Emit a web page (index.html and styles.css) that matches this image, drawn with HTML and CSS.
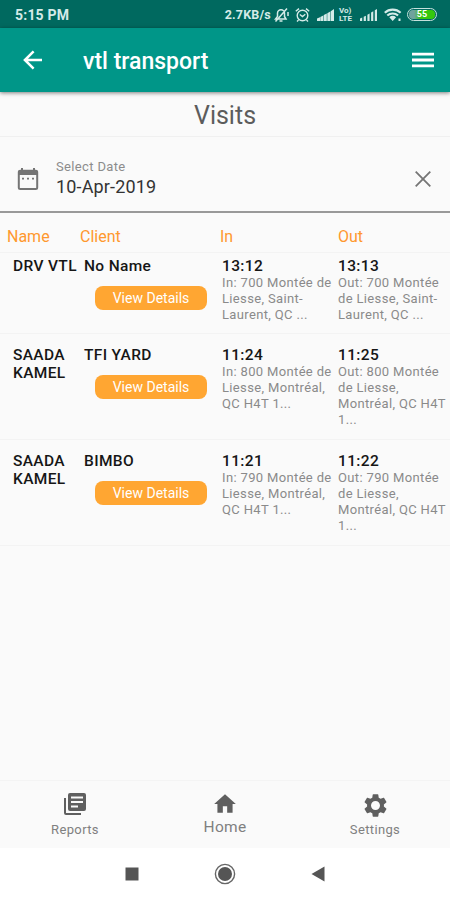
FILE: index.html
```html
<!DOCTYPE html>
<html lang="en">
<head>
    <meta charset="utf-8">
    <meta name="viewport" content="width=device-width, initial-scale=1">
    <title>vtl transport</title>
    <link rel="stylesheet" href="styles.css">
</head>
<body>

<div class="status-bar">
    <span class="clock">5:15 PM</span>
    <div class="status-icons">
        <span class="speed">2.7KB/s</span>
        <svg class="bell" width="15" height="16" viewBox="0 0 15 16" fill="none" stroke="currentColor" stroke-width="1.5">
            <path d="M1.5 12h10.5l-1.5-2.5V6.3a3.5 3.5 0 0 0-7 0v3.2zM5.5 14h3M1.5 14.5L13 1.5M14 5v4"/>
        </svg>
        <svg class="alarm" width="15" height="16" viewBox="0 0 15 16" fill="none" stroke="currentColor" stroke-width="1.4">
            <circle cx="7.5" cy="8.5" r="5.3"/>
            <path d="M4.8 7.5l2.7 2 2.8-2.2M.8 4.2L4 1.6M14.2 4.2L11 1.6M3.5 13l-1.5 1.5M11.5 13l1.5 1.5"/>
        </svg>
        <svg class="signal" width="17" height="13" viewBox="0 0 17 13" fill="currentColor">
            <path d="M0 10.5l3-1.3V13H0zM3.3 8.9l3-1.4V13h-3zM6.8 7.1l3-1.5V13h-3zM10.3 5.2l3-1.6V13h-3zM13.8 3.2L17 1v12h-3.2z"/>
        </svg>
        <span class="volte">Vo)<br>LTE</span>
        <svg class="signal" width="17" height="13" viewBox="0 0 17 13" fill="currentColor">
            <path d="M0 10.5l2.2-1V13H0zM3.7 8.7l2.2-1V13H3.7zM7.4 6.7l2.2-1.2V13H7.4zM11.1 4.5l2.2-1.2V13h-2.2zM14.8 2.2L17 1v12h-2.2z"/>
        </svg>
        <svg class="wifi" width="18" height="14" viewBox="0 0 18 14" fill="none" stroke="currentColor" stroke-width="2.1">
            <path d="M.8 4.8a11.4 11.4 0 0 1 15.8 0M3.3 7.6a7.8 7.8 0 0 1 10.8 0"/>
            <path d="M5.3 9.3a5.2 5.2 0 0 1 6.8 0L8.7 13zM14.5 10.5h2v2.5h-2z" fill="currentColor" stroke="none"/>
        </svg>
        <span class="battery"><span class="level">55</span></span>
    </div>
</div>

<header class="app-bar">
    <svg class="back" width="24" height="24" viewBox="0 0 24 24" fill="none" stroke="currentColor" stroke-width="2.5">
        <path d="M22 12H5M13.6 3.3L4.9 12l8.7 8.7"/>
    </svg>
    <h1>vtl transport</h1>
    <svg class="menu" width="22" height="16" viewBox="0 0 22 16" fill="currentColor">
        <path d="M0 .8h22v2.8H0zM0 6.6h22v2.8H0zM0 12.4h22v2.8H0z"/>
    </svg>
</header>

<h2 class="page-title">Visits</h2>

<div class="date-field">
    <svg class="calendar" width="22" height="24" viewBox="0 0 22 24">
        <rect x="1.8" y="3.8" width="18.4" height="18.2" rx="1.5" fill="none" stroke="currentColor" stroke-width="2"/>
        <path d="M1.5 3.5h19V8h-19zM4 1h2v3H4zM16 1h2v3h-2zM5 10.8h2v1.7H5zM10 10.8h2v1.7h-2zM15 10.8h2v1.7h-2z" fill="currentColor"/>
    </svg>
    <div class="date-text">
        <label>Select Date</label>
        <span>10-Apr-2019</span>
    </div>
    <svg class="clear" width="16" height="16" viewBox="0 0 16 16" fill="none" stroke="currentColor" stroke-width="1.8">
        <path d="M.7.7l14.6 14.6M15.3.7L.7 15.3"/>
    </svg>
</div>

<div class="list-head">
    <span>Name</span>
    <span>Client</span>
    <span>In</span>
    <span>Out</span>
</div>

<main class="list">
    <div class="visit first">
        <b class="name">DRV VTL</b>
        <div class="client">
            <b>No Name</b>
            <button class="btn">View Details</button>
        </div>
        <div class="stop">
            <b>13:12</b>
            <p>In: 700 Montée de<br>Liesse, Saint-<br>Laurent, QC ...</p>
        </div>
        <div class="stop">
            <b>13:13</b>
            <p>Out: 700 Montée<br>de Liesse, Saint-<br>Laurent, QC ...</p>
        </div>
    </div>
    <div class="visit">
        <b class="name">SAADA<br>KAMEL</b>
        <div class="client">
            <b>TFI YARD</b>
            <button class="btn">View Details</button>
        </div>
        <div class="stop">
            <b>11:24</b>
            <p>In: 800 Montée de<br>Liesse, Montréal,<br>QC H4T 1...</p>
        </div>
        <div class="stop">
            <b>11:25</b>
            <p>Out: 800 Montée<br>de Liesse,<br>Montréal, QC H4T<br>1...</p>
        </div>
    </div>
    <div class="visit">
        <b class="name">SAADA<br>KAMEL</b>
        <div class="client">
            <b>BIMBO</b>
            <button class="btn">View Details</button>
        </div>
        <div class="stop">
            <b>11:21</b>
            <p>In: 790 Montée de<br>Liesse, Montréal,<br>QC H4T 1...</p>
        </div>
        <div class="stop">
            <b>11:22</b>
            <p>Out: 790 Montée<br>de Liesse,<br>Montréal, QC H4T<br>1...</p>
        </div>
    </div>
</main>

<nav class="tabs">
    <a class="tab">
        <svg width="24" height="24" viewBox="0 0 24 24" fill="currentColor">
            <path d="M1 6h2v15h15v2H3a2 2 0 0 1-2-2z"/>
            <path fill-rule="evenodd" d="M7 1h14a2 2 0 0 1 2 2v14a2 2 0 0 1-2 2H7a2 2 0 0 1-2-2V3a2 2 0 0 1 2-2zM8 4.5v2h12v-2zM8 9v2h12V9zM8 13.5v2h7v-2z"/>
        </svg>
        <span>Reports</span>
    </a>
    <a class="tab active">
        <svg width="26" height="26" viewBox="0 0 24 24" fill="currentColor">
            <path d="M10 20v-6h4v6h5v-8h3L12 3 2 12h3v8z"/>
        </svg>
        <span>Home</span>
    </a>
    <a class="tab">
        <svg width="27" height="27" viewBox="0 0 24 24" fill="currentColor">
            <path d="M19.43 12.98c.04-.32.07-.64.07-.98s-.03-.66-.07-.98l2.11-1.65c.19-.15.24-.42.12-.64l-2-3.46c-.12-.22-.39-.3-.61-.22l-2.49 1c-.52-.4-1.08-.73-1.69-.98l-.38-2.65C14.46 2.18 14.25 2 14 2h-4c-.25 0-.46.18-.49.42l-.38 2.65c-.61.25-1.17.59-1.69.98l-2.49-1c-.23-.09-.49 0-.61.22l-2 3.46c-.13.22-.07.49.12.64l2.11 1.65c-.04.32-.07.65-.07.98s.03.66.07.98l-2.11 1.65c-.19.15-.24.42-.12.64l2 3.46c.12.22.39.3.61.22l2.49-1c.52.4 1.08.73 1.69.98l.38 2.65c.03.24.24.42.49.42h4c.25 0 .46-.18.49-.42l.38-2.65c.61-.25 1.17-.59 1.69-.98l2.49 1c.23.09.49 0 .61-.22l2-3.46c.12-.22.07-.49-.12-.64zM12 16c-2.2 0-4-1.8-4-4s1.8-4 4-4 4 1.8 4 4-1.8 4-4 4z"/>
        </svg>
        <span>Settings</span>
    </a>
</nav>

<div class="system-nav">
    <svg width="14" height="14" viewBox="0 0 14 14"><path d="M.5.5h13v13H.5z"/></svg>
    <svg width="22" height="22" viewBox="0 0 22 22">
        <circle cx="11" cy="11" r="9.6" fill="none" stroke="#666" stroke-width="1.4"/>
        <circle cx="11" cy="11" r="7"/>
    </svg>
    <svg width="14" height="16" viewBox="0 0 14 16"><path d="M13.5.5v15L.5 8z"/></svg>
</div>

</body>
</html>
```
FILE: styles.css
```css
* {box-sizing: border-box;}

body {
    margin: 0;
    width: 450px;
    height: 900px;
    display: flex;
    flex-direction: column;
    overflow: hidden;
    background-color: #fafafa;
    color: #161616;
    font-family: Roboto, "Liberation Sans", sans-serif;
}

h1, h2, p {
    margin: 0;
}

svg {
    display: block;
    flex: none;
}

/* Phone status bar */
.status-bar {
    height: 28px;
    flex: none;
    display: flex;
    align-items: center;
    justify-content: space-between;
    padding: 1px 13px 0 15px;
    background-color: #00695f;
    color: #d5ebe8;
}

.clock {
    font-size: 14px;
    font-weight: 700;
    letter-spacing: 0.2px;
}

.status-icons {
    display: flex;
    align-items: center;
}

.speed {
    font-size: 12.5px;
    font-weight: 700;
    letter-spacing: 0.2px;
    margin-right: 3px;
}

.alarm {
    margin: 0 7px 0 6px;
}

.volte {
    width: 15px;
    margin: 0 6px 0 5px;
    font-size: 8px;
    font-weight: 700;
    line-height: 8px;
}

.wifi {
    margin: 0 5px 0 7px;
}

.battery {
    width: 30px;
    height: 13px;
    padding: 1px;
    border: 1.5px solid #c5e0dc;
    border-radius: 7px;
}

.level {
    display: block;
    height: 9px;
    border-radius: 4px;
    background: linear-gradient(to right, #6fa39d 20%, #35c70d 45%);
    color: white;
    font-size: 9px;
    font-weight: 700;
    line-height: 9px;
    text-align: center;
}

/* Green header */
.app-bar {
    height: 64px;
    flex: none;
    display: flex;
    align-items: center;
    padding: 0 16px 0 20px;
    background-color: #009688;
    color: white;
    box-shadow: 0 1px 4px rgba(0, 0, 0, 0.5);
    z-index: 1;
}

.app-bar h1 {
    flex: 1;
    margin-left: 39px;
    padding-top: 2px;
    font-size: 23px;
    font-weight: 500;
}

.page-title {
    height: 45px;
    flex: none;
    padding-top: 6px;
    border-bottom: 1px solid #f0f0f0;
    color: #5c5c5c;
    font-size: 25px;
    font-weight: 400;
    line-height: 35px;
    text-align: center;
}

/* Date picker row */
.date-field {
    height: 76px;
    flex: none;
    display: flex;
    align-items: center;
    padding: 9px 19px 0 17px;
    border-bottom: 2px solid #999;
    color: #757575;
}

.date-text {
    flex: 1;
    display: flex;
    flex-direction: column;
    margin-left: 17px;
    padding-bottom: 2px;
}

.date-text label {
    font-size: 13px;
    line-height: 19px;
    letter-spacing: 0.35px;
    color: #8c8c8c;
}

.date-text span {
    font-size: 18px;
    line-height: 22px;
    letter-spacing: 0.15px;
    color: #333;
}

/* Visits table */
.list-head, .visit {
    display: grid;
    flex: none;
    border-bottom: 1px solid #f3f3f3;
}

.list-head {
    grid-template-columns: 73px 140px 118px 1fr;
    height: 40px;
    padding: 7px 0 0 7px;
    align-items: center;
    color: #ff982e;
    font-size: 16px;
}

.list {
    flex: 1;
}

.visit {
    grid-template-columns: 71px 138px 116px 1fr;
    height: 106px;
    padding: 12px 0 0 13px;
    white-space: nowrap;
}

.visit.first {
    height: 81px;
    padding-top: 4px;
}

.visit b {
    display: block;
    font-size: 15.5px;
    font-weight: 500;
    line-height: 18px;
    letter-spacing: 0.35px;
}

.btn {
    display: block;
    width: 112px;
    height: 24px;
    margin: 11px 0 0 11px;
    padding: 0 0 1px;
    border: none;
    border-radius: 8px;
    background-color: #ffa632;
    color: white;
    font-family: inherit;
    font-size: 14px;
}

.stop p {
    color: #8a8a8a;
    font-size: 13px;
    line-height: 16px;
    letter-spacing: 0.35px;
}

/* Bottom tabs */
.tabs {
    height: 68px;
    flex: none;
    display: flex;
    border-top: 1px solid #f4f4f4;
    color: #5f5f5f;
}

.tab {
    flex: 1;
    display: flex;
    flex-direction: column;
    align-items: center;
    justify-content: space-between;
    padding: 11px 0 9px;
    font-size: 13px;
    letter-spacing: 0.35px;
}

.tab span {
    color: #808080;
    line-height: 18px;
}

.tab.active {
    padding: 10px 0 12px;
    font-size: 15.5px;
    letter-spacing: 0.3px;
}

/* Android buttons */
.system-nav {
    height: 52px;
    flex: none;
    display: flex;
    align-items: center;
    justify-content: center;
    gap: 75px;
    background-color: white;
    fill: #555;
}
```
